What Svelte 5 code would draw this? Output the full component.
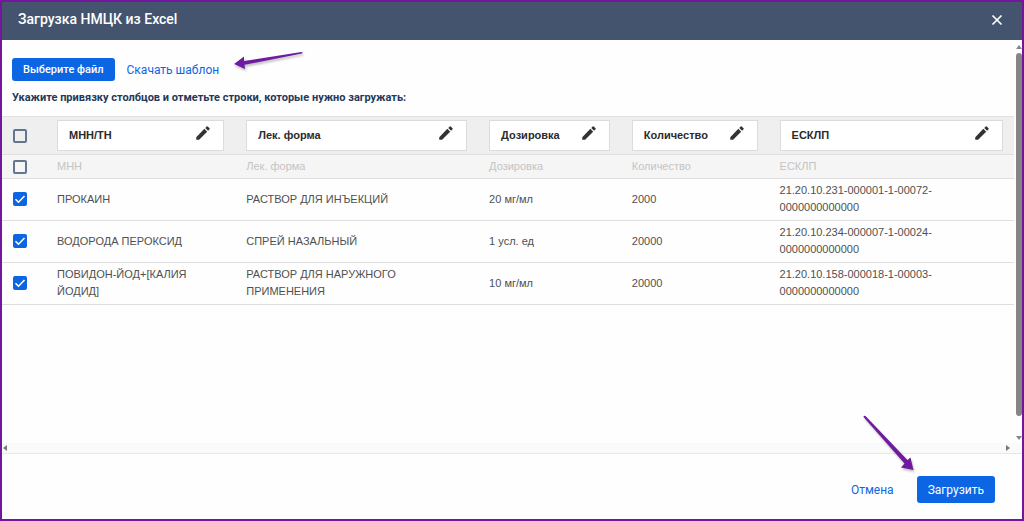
<script lang="ts">
	type Row = { name: string; form: string; dose: string; amount: string; code: string; checked: boolean };

	const columns = ['МНН/ТН', 'Лек. форма', 'Дозировка', 'Количество', 'ЕСКЛП'];

	let allChecked = $state(false);
	let rows = $state<Row[]>([
		{ name: 'МНН', form: 'Лек. форма', dose: 'Дозировка', amount: 'Количество', code: 'ЕСКЛП', checked: false },
		{ name: 'ПРОКАИН', form: 'РАСТВОР ДЛЯ ИНЪЕКЦИЙ', dose: '20 мг/мл', amount: '2000', code: '21.20.10.231-000001-1-00072-0000000000000', checked: true },
		{ name: 'ВОДОРОДА ПЕРОКСИД', form: 'СПРЕЙ НАЗАЛЬНЫЙ', dose: '1 усл. ед', amount: '20000', code: '21.20.10.234-000007-1-00024-0000000000000', checked: true },
		{ name: 'ПОВИДОН-ЙОД+[КАЛИЯ ЙОДИД]', form: 'РАСТВОР ДЛЯ НАРУЖНОГО ПРИМЕНЕНИЯ', dose: '10 мг/мл', amount: '20000', code: '21.20.10.158-000018-1-00003-0000000000000', checked: true }
	]);

	function toggleAll() {
		for (const row of rows) row.checked = allChecked;
	}
</script>

<div class="dialog" role="dialog" aria-labelledby="title">
	<header>
		<h1 id="title">Загрузка НМЦК из Excel</h1>
		<button class="close" aria-label="Закрыть">
			<svg width="12" height="12" viewBox="0 0 12 12"><path d="M1.5 1.5l9 9M10.5 1.5l-9 9" stroke="#fff" stroke-width="1.7" /></svg>
		</button>
	</header>

	<div class="body">
		<main>
			<div class="actions">
				<button class="primary file">Выберите файл</button>
				<a href="#template">Скачать шаблон</a>
			</div>
			<p>Укажите привязку столбцов и отметьте строки, которые нужно загружать:</p>

			<table>
				<colgroup>
					<col class="c-check" />
					<col class="c-name" />
					<col class="c-form" />
					<col class="c-dose" />
					<col class="c-amount" />
					<col />
				</colgroup>
				<thead>
					<tr>
						<th><input type="checkbox" aria-label="Выбрать все" bind:checked={allChecked} onchange={toggleAll} /></th>
						{#each columns as column}
							<th>
								<div class="binding">
									<span>{column}</span>
									<button aria-label="Изменить: {column}">
										<svg width="18" height="18" viewBox="0 0 24 24" fill="#333"><path d="M3 17.6V21h3.8L17.6 10.2l-3.8-3.8zM20.7 7.1a1 1 0 0 0 0-1.4l-2.4-2.4a1 1 0 0 0-1.4 0L15 5.2 18.8 9z" /></svg>
									</button>
								</div>
							</th>
						{/each}
					</tr>
				</thead>
				<tbody>
					{#each rows as row}
						<tr class:muted={!row.checked}>
							<td><input type="checkbox" aria-label={row.name} bind:checked={row.checked} /></td>
							<td>{row.name}</td>
							<td>{row.form}</td>
							<td>{row.dose}</td>
							<td>{row.amount}</td>
							<td>{row.code}</td>
						</tr>
					{/each}
				</tbody>
			</table>
		</main>

		<div class="vbar" aria-hidden="true">
			<svg width="6" height="4" viewBox="0 0 6 4"><path d="M3 0l3 4H0z" fill="#858585" /></svg>
			<div class="thumb"></div>
			<svg width="6" height="4" viewBox="0 0 6 4"><path d="M0 0h6L3 4z" fill="#858585" /></svg>
		</div>
	</div>

	<div class="hbar" aria-hidden="true">
		<svg width="4" height="6" viewBox="0 0 4 6"><path d="M4 0v6L0 3z" fill="#777" /></svg>
		<svg width="4" height="6" viewBox="0 0 4 6"><path d="M0 0l4 3-4 3z" fill="#777" /></svg>
	</div>

	<footer>
		<button class="cancel">Отмена</button>
		<button class="primary submit">Загрузить</button>
	</footer>

	<svg class="pointer to-template" width="72" height="20" viewBox="0 0 72 20" aria-hidden="true">
		<path d="M1 12L11 4.500 11 9 68.500 0q2 0 .5 1.500L11.500 12.800 12 17z" fill="#6f1ba0" />
	</svg>
	<svg class="pointer to-submit" width="54" height="58" viewBox="0 0 54 58" aria-hidden="true">
		<path d="M1.5 3q0-2 2-1L45.500 46 48.500 43.500 51.500 56 39 53.500 42.500 49.500z" fill="#6f1ba0" />
	</svg>
</div>

<style>
	:global(body) {
		margin: 0;
	}

	.dialog {
		position: relative;
		box-sizing: border-box;
		min-height: 100vh;
		display: flex;
		flex-direction: column;
		border: 2px solid #73169c;
		background: #fefefe;
		font-family: Roboto, 'Liberation Sans', sans-serif;
		color: #44546f;
	}

	button {
		padding: 0;
		border: 0;
		background: none;
		font-family: inherit;
		cursor: pointer;
	}

	svg {
		display: block;
	}

	header {
		display: flex;
		align-items: center;
		justify-content: space-between;
		height: 38px;
		padding: 0 19px 0 16px;
		background: #44546f;
	}

	h1 {
		margin: 0 0 4px;
		font-size: 14px;
		line-height: 20px;
		font-weight: 500;
		color: #fff;
	}

	.close {
		margin-bottom: 2px;
	}

	.body {
		flex: 1;
		display: flex;
	}

	main {
		flex: 1;
		min-width: 0;
		padding-top: 18px;
	}

	.actions {
		display: flex;
		align-items: center;
		gap: 12px;
		padding-left: 10px;
	}

	.primary {
		border-radius: 3px;
		background: #0c66e4;
		color: #fff;
		font-weight: 500;
	}

	.file {
		height: 23px;
		padding: 0 11px;
		font-size: 11px;
	}

	a {
		color: #0c66e4;
		font-size: 12px;
		line-height: 16px;
		text-decoration: none;
	}

	p {
		margin: 9px 10px 10px;
		font-size: 11px;
		line-height: 16px;
		font-weight: 700;
		color: #253858;
	}

	table {
		width: 100%;
		table-layout: fixed;
		border-spacing: 0;
		border-top: 1px solid #e0e0e0;
		font-family: 'Liberation Sans', Arial, sans-serif;
		font-size: 11px;
		line-height: 17px;
		color: #505050;
	}

	.c-check {
		width: 44px;
	}

	.c-name {
		width: 18.7%;
	}

	.c-form {
		width: 24%;
	}

	.c-dose {
		width: 14.1%;
	}

	.c-amount {
		width: 14.6%;
	}

	th,
	td {
		padding: 3px 11px 4px;
		border-bottom: 1px solid #dedede;
		text-align: left;
		vertical-align: middle;
	}

	th {
		padding: 3px 11px;
		background: #efefef;
	}

	td:nth-child(2) {
		padding-right: 40px;
	}

	td:nth-child(3),
	td:last-child {
		padding-right: 64px;
	}

	.muted td {
		padding-bottom: 3px;
		background: #f5f5f5;
		color: #c4c4c4;
	}

	.binding {
		display: flex;
		align-items: center;
		justify-content: space-between;
		height: 29px;
		padding: 0 11px;
		border: 1px solid #dcdcdc;
		background: #fff;
		color: #2b2b2b;
	}

	.binding button {
		margin-bottom: 5px;
	}

	input {
		appearance: none;
		display: block;
		box-sizing: border-box;
		width: 14px;
		height: 14px;
		margin: 0;
		border: 2px solid #66758f;
		border-radius: 2px;
	}

	input:checked {
		border: 0;
		background: #0c66e4 url("data:image/svg+xml,%3Csvg xmlns='http://www.w3.org/2000/svg' viewBox='0 0 14 14'%3E%3Cpath d='M2.5 7.2l3 3L11.5 4' fill='none' stroke='white' stroke-width='1.6'/%3E%3C/svg%3E");
	}

	.vbar {
		display: flex;
		flex-direction: column;
		align-items: flex-end;
		gap: 4px;
		width: 8px;
		padding: 5px 0 3px;
	}

	.thumb {
		width: 6px;
		flex: 1;
		margin-bottom: 16px;
		border-radius: 3px;
		background: #858585;
	}

	.hbar {
		display: flex;
		align-items: center;
		justify-content: space-between;
		height: 10px;
		padding: 0 12px 0 1px;
		border-bottom: 1px solid #e8e8e8;
		background: #f9fafa;
	}

	footer {
		display: flex;
		align-items: center;
		justify-content: flex-end;
		gap: 23px;
		padding: 22px 27px 16px;
	}

	footer button {
		font-size: 12px;
	}

	.cancel {
		color: #0c66e4;
	}

	.submit {
		height: 27px;
		padding: 0 11px;
		font-weight: 400;
	}

	/* hint arrows over the dialog */
	.pointer {
		position: absolute;
		filter: drop-shadow(1px 2px 1px rgba(0, 0, 0, 0.25));
		pointer-events: none;
	}

	.to-template {
		left: 231px;
		top: 50px;
	}

	.to-submit {
		right: 106px;
		bottom: 47px;
	}
</style>
